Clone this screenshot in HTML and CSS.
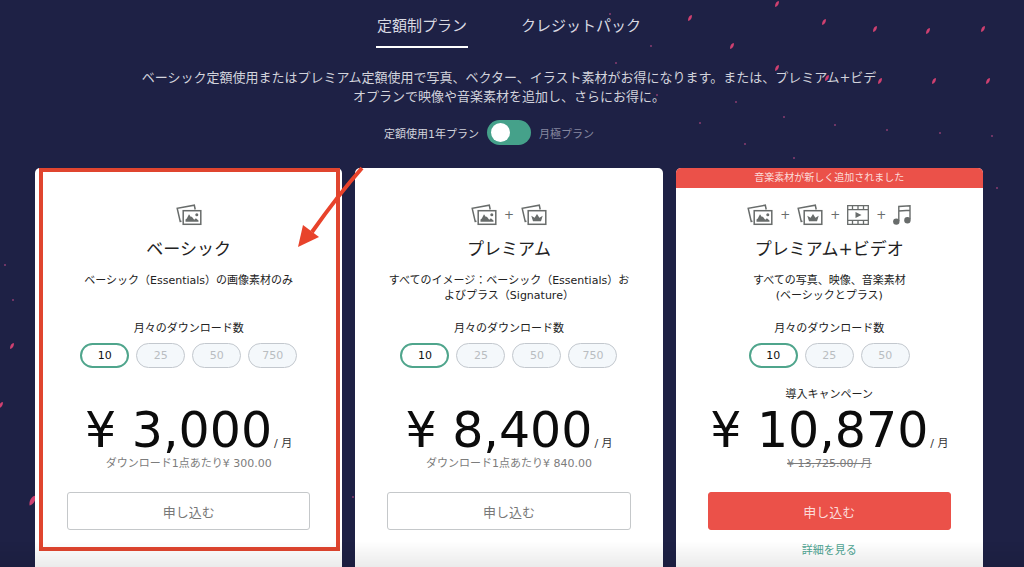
FILE: index.html
```html
<!DOCTYPE html>
<html lang="ja">
<head>
    <meta charset="UTF-8">
    <meta name="viewport" content="width=device-width, initial-scale=1.0">
    <title>定額制プラン</title>
    <link rel="stylesheet" href="styles.css">
</head>
<body>

<!-- Shared icons -->
<svg class="icon-defs" aria-hidden="true">
    <symbol id="frames" viewBox="0 0 26 22">
        <path d="M5.500 17.300 4.200 17.500 1.200 4.300 18.300 1.200 19.200 5.500" fill="none" stroke="currentColor" stroke-width="1.500"/>
        <rect x="7.200" y="6.700" width="17.600" height="13.600" fill="none" stroke="currentColor" stroke-width="1.500"/>
    </symbol>
    <symbol id="photo" viewBox="0 0 26 22">
        <use href="#frames"/>
        <path d="M9.500 17.800v-2.300l1.300-1 2.200-4.300 1.700 2.500 1.200 0 2.300 3 1.700-1.500 2.600 2.300v1.300z" fill="currentColor"/>
        <circle cx="20.800" cy="10.800" r="1.500" fill="currentColor"/>
    </symbol>
    <symbol id="crown" viewBox="0 0 26 22">
        <use href="#frames"/>
        <path d="M12 17.300 10.300 11.800 13.600 13.800 16 10 18.400 13.800 21.700 11.800 20 17.300z" fill="currentColor"/>
    </symbol>
    <symbol id="film" viewBox="0 0 22 20">
        <path d="M.7.700h20.600v18.600H.7zM.7 4.700h20.600M.7 15.300h20.600M5.500.700v4M11 .7v4M16.500.700v4M5.500 15.300v4M11 15.300v4M16.500 15.300v4" fill="none" stroke="currentColor" stroke-width="1.300"/>
        <path d="M8.500 7v6l6-3z" fill="currentColor"/>
    </symbol>
    <symbol id="music" viewBox="0 0 18 20">
        <path d="M5.800 16V1.500L17 .8V14.500M5.800 6 17 5.200" fill="none" stroke="currentColor" stroke-width="1.400"/>
        <circle cx="3.300" cy="16.600" r="3.200" fill="currentColor"/>
        <circle cx="14.400" cy="15.200" r="3.200" fill="currentColor"/>
    </symbol>
    <symbol id="petal" viewBox="-4 -4 8 8">
        <path d="M-1.800 3C-2.300.5-.8-2.800 1.800-3 2.300-.5.800 2.300-1.800 3z"/>
    </symbol>
</svg>

<!-- Confetti -->
<svg class="confetti" width="1024" height="567" aria-hidden="true">
    <g class="petals">
        <use href="#petal" x="773" y="0" width="8" height="8"/>
        <use href="#petal" x="686" y="14" width="8" height="8"/>
        <use href="#petal" x="820" y="18" width="8" height="8"/>
        <use href="#petal" x="871" y="25" width="8" height="8"/>
        <use href="#petal" x="924" y="27" width="8" height="8"/>
        <use href="#petal" x="979" y="25" width="8" height="8"/>
        <use href="#petal" x="728" y="42" width="8" height="8"/>
        <use href="#petal" x="773" y="64" width="8" height="8"/>
        <use href="#petal" x="823" y="74" width="8" height="8"/>
        <use href="#petal" x="876" y="77" width="8" height="8"/>
        <use href="#petal" x="930" y="77" width="8" height="8"/>
        <use href="#petal" x="984" y="77" width="8" height="8"/>
        <use href="#petal" x="8" y="342" width="8" height="8"/>
        <use href="#petal" x="-3" y="401" width="8" height="8"/>
        <use href="#petal" x="26" y="494" width="13" height="13"/>
    </g>
    <g class="dots">
        <circle cx="610" cy="14" r="1"/>
        <circle cx="576" cy="30" r="1"/>
        <circle cx="651" cy="46" r="1"/>
        <circle cx="616" cy="63" r="1"/>
        <circle cx="657" cy="95" r="1"/>
        <circle cx="736" cy="102" r="1"/>
        <circle cx="700" cy="123" r="1"/>
        <circle cx="784" cy="117" r="1"/>
        <circle cx="835" cy="125" r="1"/>
        <circle cx="887" cy="130" r="1"/>
        <circle cx="940" cy="133" r="1"/>
        <circle cx="992" cy="136" r="1"/>
        <circle cx="745" cy="144" r="1"/>
        <circle cx="794" cy="158" r="1"/>
        <circle cx="997" cy="188" r="1"/>
        <circle cx="5" cy="265" r="1"/>
        <circle cx="13" cy="300" r="1"/>
        <circle cx="353" cy="497" r="1"/>
    </g>
</svg>

<div class="page">
    <nav class="tabs">
        <a href="#" class="tab active">定額制プラン</a>
        <a href="#" class="tab">クレジットパック</a>
    </nav>

    <p class="intro">ベーシック定額使用またはプレミアム定額使用で写真、ベクター、イラスト素材がお得になります。または、プレミアム+ビデ<br>オプランで映像や音楽素材を追加し、さらにお得に。</p>

    <div class="billing">
        <label for="billing" class="yearly">定額使用1年プラン</label>
        <input type="checkbox" id="billing" class="switch">
        <label for="billing" class="monthly">月極プラン</label>
    </div>

    <main class="plans">
        <section class="card">
            <div class="card-body">
                <div class="icons">
                    <svg class="icon-photo"><use href="#photo"/></svg>
                </div>
                <h2>ベーシック</h2>
                <p class="desc">ベーシック（Essentials）の画像素材のみ</p>
                <p class="count-label">月々のダウンロード数</p>
                <div class="counts">
                    <button class="count selected">10</button>
                    <button class="count">25</button>
                    <button class="count">50</button>
                    <button class="count">750</button>
                </div>
                <p class="campaign"></p>
                <p class="price">¥ 3,000<span class="unit">/ 月</span></p>
                <p class="sub">ダウンロード1点あたり¥ 300.00</p>
                <button class="btn">申し込む</button>
            </div>
            <div class="highlight"></div>
            <svg class="arrow" width="68" height="84" viewBox="0 0 68 84" aria-hidden="true">
                <path d="M65 2Q42 28 15 66" fill="none" stroke="#e8432b" stroke-width="4"/>
                <path d="M1 81 6 59 22 71z" fill="#e8432b"/>
            </svg>
        </section>

        <section class="card">
            <div class="card-body">
                <div class="icons">
                    <svg class="icon-photo"><use href="#photo"/></svg>
                    <span>+</span>
                    <svg class="icon-photo"><use href="#crown"/></svg>
                </div>
                <h2>プレミアム</h2>
                <p class="desc">すべてのイメージ：ベーシック（Essentials）お<br>よびプラス（Signature）</p>
                <p class="count-label">月々のダウンロード数</p>
                <div class="counts">
                    <button class="count selected">10</button>
                    <button class="count">25</button>
                    <button class="count">50</button>
                    <button class="count">750</button>
                </div>
                <p class="campaign"></p>
                <p class="price">¥ 8,400<span class="unit">/ 月</span></p>
                <p class="sub">ダウンロード1点あたり¥ 840.00</p>
                <button class="btn">申し込む</button>
            </div>
        </section>

        <section class="card">
            <p class="banner">音楽素材が新しく追加されました</p>
            <div class="card-body">
                <div class="icons">
                    <svg class="icon-photo"><use href="#photo"/></svg>
                    <span>+</span>
                    <svg class="icon-photo"><use href="#crown"/></svg>
                    <span>+</span>
                    <svg class="icon-film"><use href="#film"/></svg>
                    <span>+</span>
                    <svg class="icon-music"><use href="#music"/></svg>
                </div>
                <h2>プレミアム+ビデオ</h2>
                <p class="desc">すべての写真、映像、音楽素材<br>(ベーシックとプラス)</p>
                <p class="count-label">月々のダウンロード数</p>
                <div class="counts">
                    <button class="count selected">10</button>
                    <button class="count">25</button>
                    <button class="count">50</button>
                </div>
                <p class="campaign">導入キャンペーン</p>
                <p class="price">¥ 10,870<span class="unit">/ 月</span></p>
                <p class="sub"><del>¥ 13,725.00/ 月</del></p>
                <button class="btn btn-primary">申し込む</button>
                <a href="#" class="details">詳細を見る</a>
            </div>
        </section>
    </main>
</div>

<div class="fade"></div>

</body>
</html>
```

FILE: styles.css
```css
* {
    box-sizing: border-box;
}
body {
    font-family: "DejaVu Sans", "Noto Sans CJK JP", sans-serif;
    font-size: 11px;
    background-color: #1e2145;
    color: #222;
    margin: 0;
}
h2, p {
    margin: 0;
    font-weight: normal;
}
button {
    font-family: inherit;
    padding: 0;
    cursor: pointer;
}
.icon-defs {
    position: absolute;
    width: 0;
    height: 0;
}
.confetti {
    position: absolute;
    top: 0;
    left: 0;
}
.petals {
    fill: #cf4070;
}
.dots {
    fill: #8a3c70;
}
.page {
    position: relative;
    display: flex;
    flex-direction: column;
    height: 100vh;
    padding: 0 41px 0 35px;
    overflow: hidden;
}

/* Header */
.tabs {
    display: flex;
    justify-content: center;
    gap: 52px;
    padding-top: 14px;
}
.tab {
    padding: 0 1px 8px;
    border-bottom: 2px solid transparent;
    color: #d9dae2;
    font-size: 15px;
    line-height: 24px;
    text-decoration: none;
}
.tab.active {
    border-color: #fff;
}
.intro {
    margin-top: 20px;
    color: #d2d3dc;
    font-size: 13px;
    line-height: 19px;
    text-align: center;
}
.billing {
    display: grid;
    grid-template-columns: 1fr auto 1fr;
    align-items: center;
    gap: 8px;
    margin-top: 14px;
    color: #d2d3dc;
}
.yearly {
    text-align: right;
}
.monthly {
    color: #8688a0;
}
.switch {
    appearance: none;
    width: 44px;
    height: 25px;
    margin: 0;
    padding: 3px 4px;
    border-radius: 13px;
    background-color: #45a18a;
    cursor: pointer;
}
.switch::before {
    content: "";
    display: block;
    width: 19px;
    height: 19px;
    border-radius: 50%;
    background-color: #fff;
}
.switch:checked::before {
    margin-left: auto;
}

/* Plans */
.plans {
    flex: 1 0 auto;
    display: grid;
    grid-template-columns: repeat(3, 1fr);
    gap: 13px;
    margin-top: 23px;
}
.card {
    position: relative;
    background-color: #fff;
    border-radius: 5px 5px 0 0;
    text-align: center;
}
.banner {
    height: 20px;
    border-radius: 5px 5px 0 0;
    background-color: #eb5149;
    color: #fbdcda;
    font-size: 10px;
    line-height: 20px;
}
.card-body {
    padding: 36px 32px 0;
}
.banner + .card-body {
    padding-top: 16px;
}
.icons {
    display: flex;
    justify-content: center;
    align-items: center;
    gap: 7px;
    height: 22px;
    color: #686c6b;
    font-size: 12px;
}
.icon-photo {
    width: 26px;
    height: 22px;
}
.icon-film {
    width: 22px;
    height: 20px;
}
.icon-music {
    width: 18px;
    height: 20px;
}
h2 {
    margin-top: 10px;
    font-size: 17px;
    line-height: 26px;
}
.desc {
    min-height: 30px;
    margin-top: 11px;
    line-height: 15px;
}
.count-label {
    margin-top: 18px;
    line-height: 16px;
}
.counts {
    display: flex;
    justify-content: center;
    gap: 7px;
    margin-top: 6px;
}
.count {
    width: 49px;
    height: 25px;
    border: 1px solid #c3c8ce;
    border-radius: 13px;
    background-color: #f4f8fb;
    color: #b9bdc1;
    font-size: 11px;
}
.count.selected {
    border: 2px solid #4fa58c;
    background-color: #fff;
    color: #111;
}
.campaign {
    height: 16px;
    margin-top: 19px;
    line-height: 16px;
}
.price {
    margin-top: 4px;
    color: #0c0c0c;
    font-size: 49px;
    line-height: 48px;
    white-space: nowrap;
}
.unit {
    margin-left: 2px;
    color: #333;
    font-size: 11px;
    line-height: 11px;
}
.sub {
    margin-top: 1px;
    color: #7c7c7c;
    line-height: 16px;
}
.btn {
    display: block;
    width: 100%;
    height: 38px;
    margin-top: 20px;
    border: 1px solid #c5c8ca;
    border-radius: 3px;
    background-color: #fff;
    color: #777;
    font-size: 13px;
}
.btn-primary {
    border-color: #eb5149;
    background-color: #eb5149;
    color: #fbdcda;
}
.details {
    display: block;
    margin-top: 13px;
    color: #4fa593;
    line-height: 16px;
    text-decoration: none;
}

/* Marker drawn over the first plan */
.highlight {
    position: absolute;
    top: 0;
    left: 4px;
    right: 2px;
    height: 383px;
    border: 4px solid #e0452f;
    pointer-events: none;
}
.arrow {
    position: absolute;
    top: -2px;
    right: -23px;
    z-index: 1;
    pointer-events: none;
}
.fade {
    position: fixed;
    left: 0;
    right: 0;
    bottom: 0;
    height: 26px;
    background: linear-gradient(transparent, rgba(0, 0, 0, 0.08));
    pointer-events: none;
}
```
